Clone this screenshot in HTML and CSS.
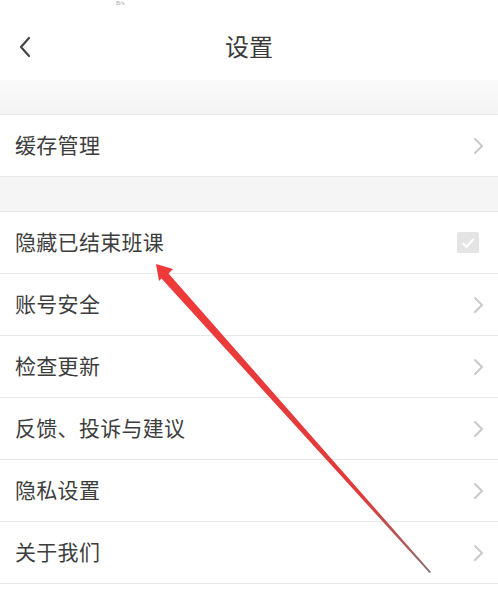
FILE: index.html
```html
<!DOCTYPE html>
<html lang="zh">
<head>
<meta charset="utf-8">
<title>设置</title>
<link rel="stylesheet" href="styles.css">
</head>
<body>
<div class="page">
  <div class="status"><span class="speed">B/s</span></div>
  <header class="nav">
    <svg class="back" width="14" height="22" viewBox="0 0 14 22"><path d="M11 2 L3 11 L11 20" fill="none" stroke="#444" stroke-width="2.2" stroke-linecap="round" stroke-linejoin="round"/></svg>
    <h1 class="title">设置</h1>
  </header>
  <div class="gap gap-top"></div>
  <section class="group">
    <div class="row"><span class="label">缓存管理</span><svg class="chev" width="12" height="18" viewBox="0 0 12 18"><path d="M2 2 L9 9 L2 16" fill="none" stroke="#c9c9c9" stroke-width="2" stroke-linecap="round" stroke-linejoin="round"/></svg></div>
  </section>
  <div class="gap"></div>
  <section class="group">
    <div class="row"><span class="label">隐藏已结束班课</span><span class="check"><svg width="22" height="22" viewBox="0 0 22 22"><path d="M6 11.5 L9.5 15 L16 7.5" fill="none" stroke="#fff" stroke-width="2" stroke-linecap="round" stroke-linejoin="round"/></svg></span></div>
    <div class="row"><span class="label">账号安全</span><svg class="chev" width="12" height="18" viewBox="0 0 12 18"><path d="M2 2 L9 9 L2 16" fill="none" stroke="#c9c9c9" stroke-width="2" stroke-linecap="round" stroke-linejoin="round"/></svg></div>
    <div class="row"><span class="label">检查更新</span><svg class="chev" width="12" height="18" viewBox="0 0 12 18"><path d="M2 2 L9 9 L2 16" fill="none" stroke="#c9c9c9" stroke-width="2" stroke-linecap="round" stroke-linejoin="round"/></svg></div>
    <div class="row"><span class="label">反馈、投诉与建议</span><svg class="chev" width="12" height="18" viewBox="0 0 12 18"><path d="M2 2 L9 9 L2 16" fill="none" stroke="#c9c9c9" stroke-width="2" stroke-linecap="round" stroke-linejoin="round"/></svg></div>
    <div class="row"><span class="label">隐私设置</span><svg class="chev" width="12" height="18" viewBox="0 0 12 18"><path d="M2 2 L9 9 L2 16" fill="none" stroke="#c9c9c9" stroke-width="2" stroke-linecap="round" stroke-linejoin="round"/></svg></div>
    <div class="row"><span class="label">关于我们</span><svg class="chev" width="12" height="18" viewBox="0 0 12 18"><path d="M2 2 L9 9 L2 16" fill="none" stroke="#c9c9c9" stroke-width="2" stroke-linecap="round" stroke-linejoin="round"/></svg></div>
  </section>
  <svg class="arrow" width="498" height="594" viewBox="0 0 498 594">
    <defs>
      <linearGradient id="ag" x1="156" y1="264" x2="431" y2="573" gradientUnits="userSpaceOnUse">
        <stop offset="0" stop-color="#f03a3a"/>
        <stop offset="0.75" stop-color="#e03a3a"/>
        <stop offset="1" stop-color="#8a7070"/>
      </linearGradient>
    </defs>
    <polygon points="156,264 173,269 168.5,273.5 431,572 429.5,573 161.5,278.5 159,281" fill="url(#ag)"/>
  </svg>
</div>
</body>
</html>
```

FILE: styles.css
```css
html, body {
  margin: 0;
  padding: 0;
  background: #ffffff;
}
.page {
  position: relative;
  width: 498px;
  height: 594px;
  overflow: hidden;
  background: #ffffff;
  font-family: "Noto Sans CJK SC", "Noto Sans", sans-serif;
  color: #3d3d3d;
}
.status {
  height: 12px;
  position: relative;
}
.speed {
  position: absolute;
  left: 116px;
  top: 0;
  font-size: 6px;
  line-height: 6px;
  color: #b0b0b0;
  font-family: "Liberation Sans", sans-serif;
}
.nav {
  height: 68px;
  display: flex;
  align-items: center;
  justify-content: center;
  position: relative;
}
.back {
  position: absolute;
  left: 18px;
  top: 24px;
}
.title {
  margin: 0;
  margin-top: -2px;
  font-size: 24px;
  font-weight: 400;
  color: #3a3a3a;
}
.gap {
  height: 34px;
  background: #f5f5f5;
}
.gap-top {
  height: 34px;
  background: linear-gradient(#fafafa, #f4f4f4);
}
.group {
  border-top: 1px solid #e6e6e6;
  background: #fff;
}
.row {
  height: 61px;
  border-bottom: 1px solid #e8e8e8;
  display: flex;
  align-items: center;
  justify-content: space-between;
  padding: 0 12px 0 15px;
}
.label {
  font-size: 21px;
  color: #3d3d3d;
  letter-spacing: 0.3px;
  margin-top: -3px;
}
.chev {
  margin-right: 1px;
}
.check {
  width: 22px;
  height: 21px;
  background: #e4e4e4;
  border-radius: 2px;
  display: flex;
  align-items: center;
  justify-content: center;
  margin-right: 7px;
}
.arrow {
  position: absolute;
  left: 0;
  top: 0;
  pointer-events: none;
}
```
